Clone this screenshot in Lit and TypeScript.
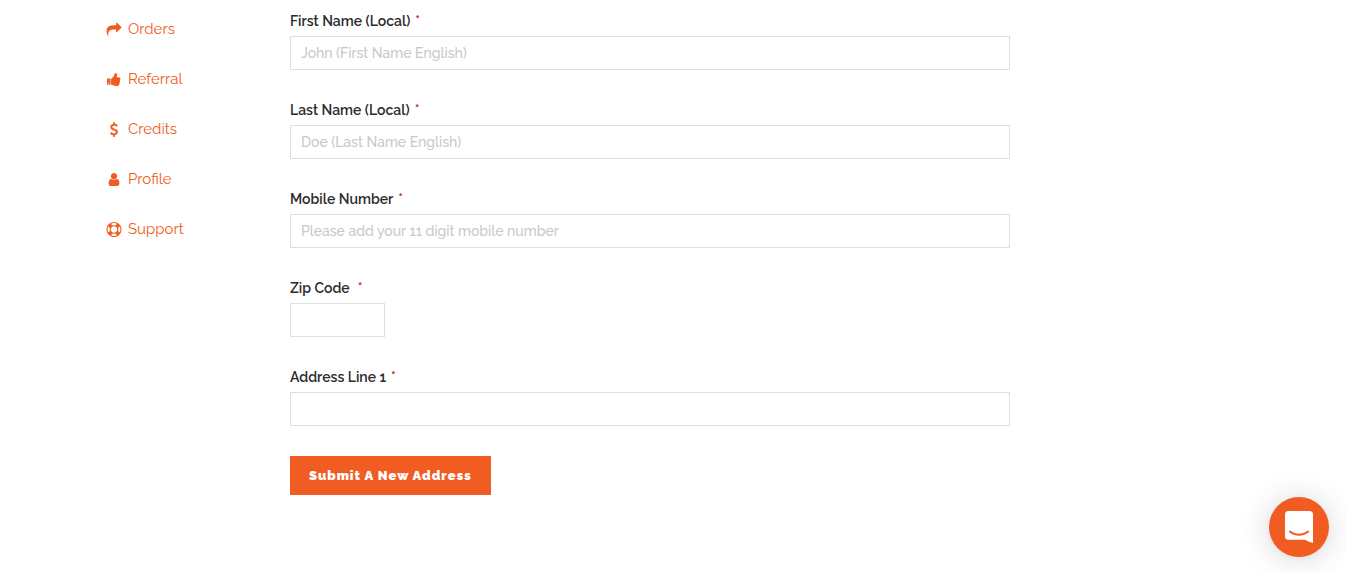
import { LitElement, html, css, svg } from "lit";
import { customElement } from "lit/decorators.js";

interface NavItem {
  label: string;
  path: string;
}

interface Field {
  id: string;
  label: string;
  placeholder?: string;
  type?: string;
  short?: boolean;
  spaced?: boolean;
}

const NAV: NavItem[] = [
  {
    label: "Orders",
    path: "M1792 640q0 26-19 45l-512 512q-19 19-45 19t-45-19-19-45v-256h-224q-98 0-175.500 6t-154 21.500-133 42.500-105.500 69.500-80 101-48.500 138.500-17.500 181q0 55 5 123 0 6 2.500 23.500t2.500 26.500q0 15-8.500 25t-23.500 10q-16 0-28-17-7-9-13-22t-13.500-30-10.500-24q-127-285-127-451 0-199 53-333 162-403 875-403h224v-256q0-26 19-45t45-19 45 19l512 512q19 19 19 45z",
  },
  {
    label: "Referral",
    path: "M320 1344q0-26-19-45t-45-19q-27 0-45.500 19t-18.500 45q0 27 18.500 45.500t45.500 18.500q26 0 45-18.500t19-45.500zm160-512v640q0 26-19 45t-45 19h-288q-26 0-45-19t-19-45v-640q0-26 19-45t45-19h288q26 0 45 19t19 45zm1184 0q0 86-55 149 15 44 15 76 3 76-43 137 17 56 0 117-15 57-54 94 9 112-49 181-64 76-197 78h-129q-66 0-144-15.500t-121.500-29-120.500-39.500q-123-43-158-44-26-1-45-19.500t-19-44.500v-641q0-25 18-43.500t43-20.500q24-2 76-59t101-121q68-87 101-120 18-18 31-48t17.500-48.500 13.500-60.500q7-39 12.500-61t19.500-52 34-50q19-19 45-19 46 0 82.500 10.500t60 26 40 40.500 24 45 12 50 5 45 .5 39q0 38-9.500 76t-19 60-27.500 56q-3 6-10 18t-11 22-8 24h277q78 0 135 57t57 135z",
  },
  {
    label: "Credits",
    path: "M1362 1185q0 153-99.500 263.500t-258.500 136.500v175q0 14-9 23t-23 9h-135q-13 0-22.500-9.500t-9.500-22.500v-175q-66-9-127.500-31t-101.500-44.500-74-48-46.500-37.500-17.500-18q-17-21-2-41l103-135q7-10 23-12 15-2 24 9l2 2q113 99 243 125 37 8 74 8 81 0 142.500-43t61.500-122q0-28-15-53t-33.500-42-58.500-37.500-66-32-80-32.500q-39-16-61.500-25t-61.500-26.500-62.500-31-56.500-35.500-53.500-42.500-43.500-49-35.500-58-21-66.500-8.500-78q0-138 98-242t255-134v-180q0-13 9.500-22.500t22.500-9.500h135q14 0 23 9t9 23v176q57 6 110.500 23t87 33.500 63.500 37.500 39 29 15 14q17 18 5 38l-81 146q-8 15-23 16-14 3-27-7-3-3-14.500-12t-39-26.500-58.500-32-74.500-26-85.500-11.500q-95 0-155 43t-60 111q0 26 8.500 48t29.500 41.500 39.500 33 56 31 60.500 27 70 27.500q53 20 81 31.500t76 35 75.500 42.500 62 50 53 63.500 31.500 76.500 13 94z",
  },
  {
    label: "Profile",
    path: "M1536 1399q0 109-62.500 187t-150.500 78h-854q-88 0-150.500-78t-62.500-187q0-85 8.500-160.500t31.500-152 58.500-131 94-89 134.500-34.500q131 128 313 128t313-128q76 0 134.500 34.500t94 89 58.500 131 31.500 152 8.500 160.500zm-256-887q0 159-112.500 271.500t-271.500 112.500-271.500-112.500-112.500-271.500 112.500-271.500 271.500-112.500 271.500 112.500 112.500 271.500z",
  },
  {
    label: "Support",
    path: "M896 0q182 0 348 71t286 191 191 286 71 348-71 348-191 286-286 191-348 71-348-71-286-191-191-286-71-348 71-348 191-286 286-191 348-71zm0 128q-190 0-361 90l194 194q82-28 167-28t167 28l194-194q-171-90-361-90zm-678 1129l194-194q-28-82-28-167t28-167l-194-194q-90 171-90 361t90 361zm678 407q190 0 361-90l-194-194q-82 28-167 28t-167-28l-194 194q171 90 361 90zm0-384q159 0 271.500-112.500t112.500-271.500-112.500-271.500-271.500-112.500-271.500 112.500-112.500 271.500 112.500 271.500 271.500 112.500zm484-217l194 194q90-171 90-361t-90-361l-194 194q28 82 28 167t-28 167z",
  },
];

const FIELDS: Field[] = [
  { id: "first-name", label: "First Name (Local)", placeholder: "John (First Name English)" },
  { id: "last-name", label: "Last Name (Local)", placeholder: "Doe (Last Name English)" },
  { id: "mobile", label: "Mobile Number", placeholder: "Please add your 11 digit mobile number", type: "tel" },
  { id: "zip", label: "Zip Code", short: true, spaced: true },
  { id: "address-1", label: "Address Line 1" },
];

@customElement("app-root")
export class AppRoot extends LitElement {
  static styles = css`
    :host {
      display: block;
      background: #fff;
      color: #2b2b2b;
      font-family: Raleway, Lato, "Open Sans", sans-serif;
      font-size: 14px;
      font-weight: 500;
    }
    .page {
      display: flex;
      max-width: 1134px;
      margin: 0 auto;
    }
    .nav {
      flex: 0 0 184px;
      padding-top: 4px;
    }
    .nav-list {
      list-style: none;
      margin: 0;
      padding: 0;
    }
    .nav-link {
      display: flex;
      align-items: center;
      gap: 6px;
      height: 50px;
      color: #f15c22;
      font-size: 15px;
      font-weight: 400;
      text-decoration: none;
    }
    .nav-icon {
      width: 16px;
      height: 15px;
      fill: currentColor;
    }
    .form {
      flex: 0 1 720px;
      min-width: 0;
      display: flex;
      flex-direction: column;
      align-items: flex-start;
      gap: 30px;
      padding-top: 11px;
    }
    .field {
      display: flex;
      flex-direction: column;
      gap: 5px;
      width: 100%;
    }
    .label {
      display: flex;
      gap: 5px;
      line-height: 20px;
      font-weight: 600;
    }
    .label-spaced {
      gap: 8px;
    }
    .required {
      color: #b03030;
    }
    .input {
      box-sizing: border-box;
      width: 100%;
      height: 34px;
      padding: 0 10px;
      border: 1px solid #dedede;
      border-radius: 0;
      background: #fff;
      color: #2b2b2b;
      font: inherit;
      outline: none;
    }
    .input-short {
      width: 95px;
    }
    .input::placeholder {
      color: #c8c8c8;
      opacity: 1;
    }
    .submit {
      height: 39px;
      padding: 0 19px;
      border: 0;
      background: #f15c22;
      color: #fff;
      font-family: inherit;
      font-size: 13px;
      font-weight: 900;
      letter-spacing: 1px;
      cursor: pointer;
    }
    .chat {
      position: fixed;
      right: 17px;
      bottom: 16px;
      width: 60px;
      height: 60px;
      padding: 0;
      border: 0;
      border-radius: 50%;
      background: #f15c22;
      box-shadow: 0 1px 6px rgba(0, 0, 0, 0.06), 0 2px 32px rgba(0, 0, 0, 0.16);
      cursor: pointer;
    }
    .chat-icon {
      display: block;
      margin: 14px 16px;
      width: 28px;
      height: 32px;
    }
  `;

  private navItem(item: NavItem) {
    return html`<li>
      <a class="nav-link" href="#">
        <svg class="nav-icon" viewBox="0 0 1792 1792" aria-hidden="true">${svg`<path d=${item.path}></path>`}</svg>
        <span>${item.label}</span>
      </a>
    </li>`;
  }

  private field(f: Field) {
    return html`<div class="field">
      <label class="label ${f.spaced ? "label-spaced" : ""}" for=${f.id}>
        <span>${f.label}</span><span class="required">*</span>
      </label>
      <input
        class="input ${f.short ? "input-short" : ""}"
        id=${f.id}
        name=${f.id}
        type=${f.type ?? "text"}
        placeholder=${f.placeholder ?? ""}
        required
      />
    </div>`;
  }

  render() {
    return html`
      <div class="page">
        <nav class="nav">
          <ul class="nav-list">
            ${NAV.map((item) => this.navItem(item))}
          </ul>
        </nav>
        <form class="form" novalidate @submit=${(e: Event) => e.preventDefault()}>
          ${FIELDS.map((f) => this.field(f))}
          <button class="submit" type="submit">Submit A New Address</button>
        </form>
      </div>
      <button class="chat" type="button" aria-label="Open chat">
        <svg class="chat-icon" viewBox="0 0 28 32" aria-hidden="true">
          <path fill="#fff" d="M3.500 0H24.500Q28 0 28 3.500V32Q24 31 20 28.800H3.500Q0 28.800 0 25.300V3.500Q0 0 3.500 0Z"></path>
          <path fill="none" stroke="#f15c22" stroke-width="1.900" stroke-linecap="round" d="M4.800 20.600Q8.800 23.800 14 23.800T23.200 20.600"></path>
        </svg>
      </button>
    `;
  }
}
